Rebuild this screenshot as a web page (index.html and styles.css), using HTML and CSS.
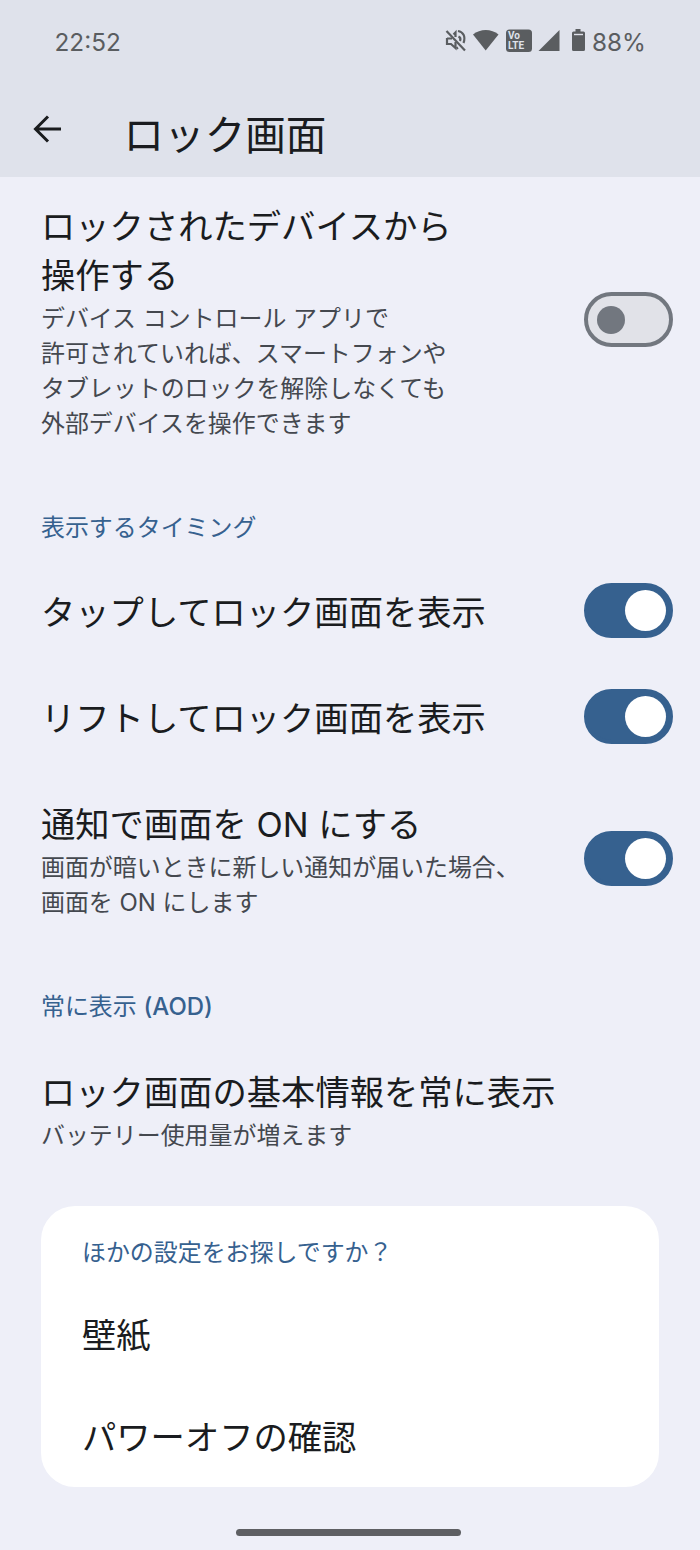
FILE: index.html
```
<!DOCTYPE html>
<html lang="ja">
<head>
<meta charset="utf-8">
<title>ロック画面</title>
<link rel="stylesheet" href="styles.css">
</head>
<body>
<header class="header">
  <div class="status">
    <span class="clock">22:52</span>
    <svg class="status-icons" width="142" height="26" viewBox="0 0 142 26" fill="#5a5d60">
      <g fill="none" stroke="#5a5d60" stroke-width="2.200">
        <path d="M1.500 3 20 22.500"/>
        <path d="M2 10v6h4l4.500 4v-6M2 10.500h5M8.500 6.500 10.500 4.500v4.500"/>
        <path d="M13.500 8.500c1.800.8 2.200 2.800 1.500 4.500M13 3c5 .8 8 5.500 5.500 12M13 19.500l-1.500 1"/>
      </g>
      <path d="M28 6.500C35 .5 46.500.500 53.500 6.500L40.700 22.500z"/>
      <rect x="61" y="1.500" width="26" height="22.500" rx="3.500"/>
      <text class="volte" x="63" y="10.500">Vo</text>
      <text class="volte" x="63" y="21">LTE</text>
      <path d="M93.500 23 114.500 2v21z"/>
      <path d="M130.500 1h5v2.500h3a1.500 1.500 0 0 1 1.500 1.500v16.500a1.500 1.500 0 0 1-1.500 1.500h-10a1.500 1.500 0 0 1-1.500-1.500V5a1.500 1.500 0 0 1 1.500-1.500h2z"/>
      <path d="M129 6.500h9" stroke="#dfe2eb" stroke-width="1.400"/>
    </svg>
    <span class="battery">88%</span>
  </div>
  <div class="bar">
    <svg class="back" width="30" height="28" viewBox="0 0 30 28" fill="none" stroke="#1a1c1e" stroke-width="3">
      <path d="M15 1.500 2.500 14 15 26.500M2.500 14H28"/>
    </svg>
    <h1 class="heading">ロック画面</h1>
  </div>
</header>
<main class="content">
  <section class="row row-device">
    <div>
      <h2 class="title">ロックされたデバイスから<br>操作する</h2>
      <p class="summary">デバイス コントロール アプリで<br>許可されていれば、スマートフォンや<br>タブレットのロックを解除しなくても<br>外部デバイスを操作できます</p>
    </div>
    <span class="switch"></span>
  </section>
  <h3 class="category category-timing">表示するタイミング</h3>
  <section class="row row-tap">
    <h2 class="title">タップしてロック画面を表示</h2>
    <span class="switch on"></span>
  </section>
  <section class="row row-lift">
    <h2 class="title">リフトしてロック画面を表示</h2>
    <span class="switch on"></span>
  </section>
  <section class="row row-notify">
    <div>
      <h2 class="title">通知で画面を ON にする</h2>
      <p class="summary">画面が暗いときに新しい通知が届いた場合、<br>画面を ON にします</p>
    </div>
    <span class="switch on"></span>
  </section>
  <h3 class="category category-aod">常に表示 <span class="latin">(AOD)</span></h3>
  <section class="row row-always">
    <div>
      <h2 class="title">ロック画面の基本情報を常に表示</h2>
      <p class="summary">バッテリー使用量が増えます</p>
    </div>
  </section>
  <section class="card">
    <h3 class="category">ほかの設定をお探しですか？</h3>
    <h2 class="title card-link">壁紙</h2>
    <h2 class="title card-link">パワーオフの確認</h2>
  </section>
  <div class="home"></div>
</main>
</body>
</html>
```
FILE: styles.css
```
* { box-sizing: border-box; }
body {
  margin: 0;
  height: 1550px;
  overflow: hidden;
  background: #eeeff8;
  color: #1a1c20;
  font-family: Inter, "Noto Sans CJK JP", sans-serif;
}
h1, h2, h3, p { margin: 0; font-weight: 400; white-space: nowrap; }
.header { height: 177px; background: #dfe2eb; }
.status {
  display: flex;
  align-items: center;
  height: 81px;
  padding: 2px 0 0 54.5px;
  color: #5a5d60;
  font-size: 24.3px;
  line-height: 30px;
}
.clock { width: 390.5px; }
.status-icons { display: block; margin-top: -1px; }
.battery { margin-left: 5px; }
.volte { fill: #dfe2eb; font: 700 10px/1 Roboto, sans-serif; }
.bar { display: flex; align-items: center; height: 96px; padding: 0 0 0 33px; }
.back { margin-right: 60.5px; }
.heading { font-size: 40.6px; line-height: 60px; margin-top: 13px; }
.content { padding-top: 25px; }
.row {
  display: flex;
  justify-content: space-between;
  align-items: center;
  padding: 0 27px 0 41px;
}
.title { font-size: 34.3px; line-height: 49px; }
.summary { margin-top: 1px; font-size: 23.95px; line-height: 35px; color: #44484f; }
.category { font-size: 23.95px; line-height: 35px; color: #36618f; }
.row-device { height: 239px; }
.row-device .switch { margin-top: -4px; }
.category-timing { margin: 69px 0 0 41px; }
.row-tap { height: 56px; margin-top: 37px; }
.row-lift { height: 56px; margin-top: 50px; }
.row-tap .title, .row-lift .title { padding-top: 4px; }
.row-notify { height: 120px; margin-top: 56px; }
.row-notify .switch { margin-top: -3px; }
.category-aod { margin: 69px 0 0 41px; }
.latin { font-weight: 500; }
.row-always { margin-top: 44px; }
.switch {
  display: flex;
  align-items: center;
  width: 89px;
  height: 55px;
  padding-left: 9px;
  border: 4px solid #72777f;
  border-radius: 28px;
  background: #e1e2e8;
}
.switch::after {
  content: "";
  width: 28px;
  height: 28px;
  border-radius: 50%;
  background: #72777f;
}
.switch.on { padding-left: 37px; border-color: #36618f; background: #36618f; }
.switch.on::after { width: 41px; height: 41px; background: #fff; }
.card {
  height: 281px;
  margin: 53px 41px 0;
  padding: 29px 41px;
  border-radius: 34px;
  background: #fff;
}
.card-link { margin-top: 41px; }
.card-link + .card-link { margin-top: 53px; }
.home { width: 225px; height: 7px; margin: 42px 0 0 236px; border-radius: 4px; background: #5e5f63; }
```
